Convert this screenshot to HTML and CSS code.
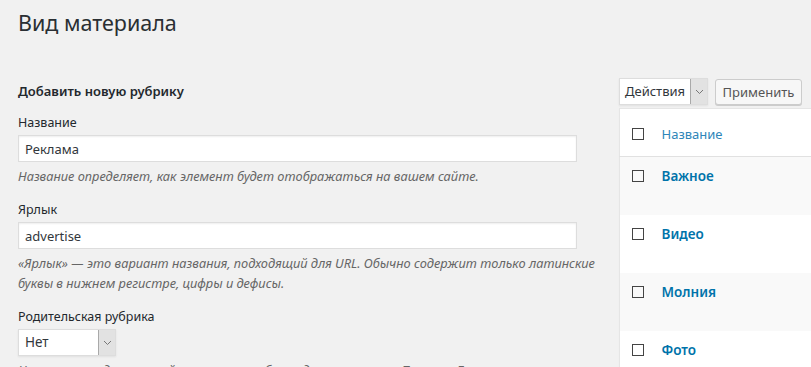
FILE: index.html
```html
<!DOCTYPE html>
<html lang="ru">
<head>
    <meta charset="UTF-8">
    <meta name="viewport" content="width=device-width, initial-scale=1.0">
    <title>Вид материала</title>
    <link rel="stylesheet" href="styles.css">
</head>
<body>
    <div class="wrap">
        <h1>Вид материала</h1>

        <div class="columns">
            <div class="col-left">
                <h2>Добавить новую рубрику</h2>
                <form id="addtag">
                    <div class="form-field">
                        <label for="tag-name">Название</label>
                        <input type="text" id="tag-name" value="Реклама">
                        <p class="help">Название определяет, как элемент будет отображаться на вашем сайте.</p>
                    </div>

                    <div class="form-field">
                        <label for="tag-slug">Ярлык</label>
                        <input type="text" id="tag-slug" value="advertise">
                        <p class="help">«Ярлык» — это вариант названия, подходящий для URL. Обычно содержит только латинские буквы в нижнем регистре, цифры и дефисы.</p>
                    </div>

                    <div class="form-field">
                        <label for="parent">Родительская рубрика</label>
                        <div class="select select-parent">
                            <span class="select-value">Нет</span>
                            <span class="select-arrow">
                                <svg width="9" height="6" viewBox="0 0 9 6"><path d="M1 1l3.5 3.5L8 1" fill="none" stroke="#777" stroke-width="1"/></svg>
                            </span>
                        </div>
                        <p class="help">Назначьте родительский элемент, чтобы создать иерархию. Термин «Джаз», например, может быть родителем для «Бибопа» и «Биг-бэнда».</p>
                    </div>
                </form>
            </div>

            <div class="col-right">
                <div class="tablenav">
                    <div class="select select-action">
                        <span class="select-value">Действия</span>
                        <span class="select-arrow">
                            <svg width="9" height="6" viewBox="0 0 9 6"><path d="M1 1l3.5 3.5L8 1" fill="none" stroke="#777" stroke-width="1"/></svg>
                        </span>
                    </div>
                    <button type="button" class="button">Применить</button>
                </div>

                <table class="list-table">
                    <thead>
                        <tr>
                            <td class="check-column"><span class="checkbox"></span></td>
                            <th><a href="#">Название</a></th>
                        </tr>
                    </thead>
                    <tbody>
                        <tr>
                            <td class="check-column"><span class="checkbox"></span></td>
                            <td><a class="row-title" href="#">Важное</a></td>
                        </tr>
                        <tr>
                            <td class="check-column"><span class="checkbox"></span></td>
                            <td><a class="row-title" href="#">Видео</a></td>
                        </tr>
                        <tr>
                            <td class="check-column"><span class="checkbox"></span></td>
                            <td><a class="row-title" href="#">Молния</a></td>
                        </tr>
                        <tr>
                            <td class="check-column"><span class="checkbox"></span></td>
                            <td><a class="row-title" href="#">Фото</a></td>
                        </tr>
                    </tbody>
                </table>
            </div>
        </div>
    </div>
</body>
</html>
```

FILE: styles.css
```css
html, body {
    overflow: hidden;
}
body {
    font-family: "Noto Sans", "Open Sans", sans-serif;
    font-size: 12.5px;
    background: #f1f1f1;
    color: #23282d;
    margin: 0;
}
.wrap {
    padding-left: 18px;
}
h1 {
    font-size: 21.5px;
    font-weight: 400;
    line-height: 29px;
    margin: 0;
    padding-top: 8px;
    color: #2a2f33;
}
.columns {
    display: flex;
    align-items: flex-start;
}
.col-left {
    flex: 0 0 590px;
}
.col-right {
    flex: 0 0 420px;
    margin-left: 11px;
    margin-top: 41px;
}
h2 {
    font-size: 13px;
    font-weight: 600;
    line-height: 20px;
    margin: 44px 0 13px;
}
.form-field {
    margin-bottom: 15px;
}
label {
    display: block;
    line-height: 18px;
    margin-bottom: 3px;
}
input {
    display: block;
    box-sizing: border-box;
    width: 559px;
    height: 27px;
    padding: 0 6px;
    margin: 0;
    font: inherit;
    font-size: 13px;
    color: #32373c;
    background: #fff;
    border: 1px solid #ddd;
    box-shadow: inset 0 1px 2px rgba(0, 0, 0, 0.07);
}
.help {
    margin: 4px 0 0;
    font-style: italic;
    font-size: 12.8px;
    line-height: 20px;
    color: #666;
}
.select {
    display: flex;
    box-sizing: border-box;
    height: 27px;
    background: #fff;
    border: 1px solid #ddd;
    box-shadow: 0 1px 2px rgba(0, 0, 0, 0.07);
    color: #32373c;
}
.select-value {
    flex: 1;
    line-height: 25px;
    padding-left: 6px;
}
.select-arrow {
    display: flex;
    align-items: center;
    justify-content: center;
    width: 16px;
    background: #e2e2e2;
    border-left: 1px solid #a9a9a9;
}
.select-parent {
    width: 98px;
    margin-bottom: 2px;
}
.select-parent .select-value {
    font-size: 13.5px;
}
.tablenav {
    display: flex;
    gap: 7px;
    height: 30px;
}
.select-action {
    width: 89px;
    font-size: 13px;
}
.select-action .select-value {
    padding-left: 5px;
}
.button {
    box-sizing: border-box;
    width: 87px;
    height: 26px;
    margin-top: 1px;
    padding: 0;
    font: inherit;
    font-size: 13px;
    color: #555;
    background: #f7f7f7;
    border: 1px solid #ccc;
    border-radius: 3px;
    box-shadow: 0 1px 0 #ccc;
}
.list-table {
    width: 100%;
    border-collapse: collapse;
    background: #fff;
    border: 1px solid #e5e5e5;
    box-shadow: 0 1px 1px rgba(0, 0, 0, 0.04);
}
.list-table td, .list-table th {
    text-align: left;
    vertical-align: top;
    padding: 0;
}
.list-table thead tr {
    height: 48px;
    border-bottom: 1px solid #e1e1e1;
}
.list-table thead th, .list-table thead td {
    vertical-align: middle;
    padding-top: 2px;
}
.list-table tbody tr {
    height: 58px;
}
.list-table tbody tr:nth-child(odd) {
    background: #f9f9f9;
}
.list-table tbody td {
    padding-top: 9px;
    line-height: 20px;
}
.check-column {
    width: 42px;
    padding-left: 12px !important;
    box-sizing: border-box;
}
.checkbox {
    display: block;
    width: 10px;
    height: 10px;
    border: 1px solid #444;
}
.list-table tbody .checkbox {
    margin-top: 4px;
}
a {
    color: #0073aa;
    text-decoration: none;
}
th a {
    font-weight: 400;
    font-size: 13px;
    color: #2e86b9;
}
.row-title {
    font-size: 13.5px;
    font-weight: 600;
}
```
